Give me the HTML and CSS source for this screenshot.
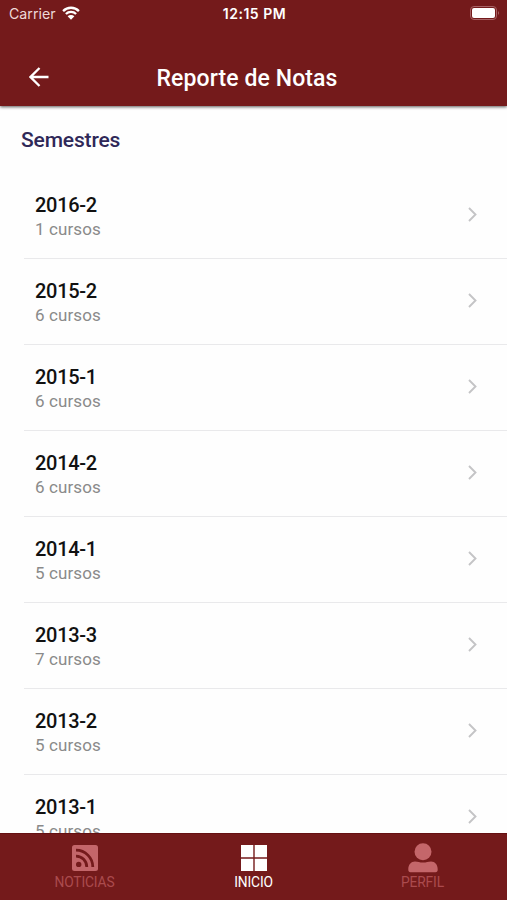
FILE: index.html
```html
<!doctype html>
<html lang="es">
  <head>
    <meta charset="UTF-8" />
    <meta name="viewport" content="width=device-width, initial-scale=1.0" />
    <title>Reporte de Notas</title>
    <link rel="stylesheet" href="styles.css">
  </head>
  <body>

    <header class="header">
      <div class="status-bar">
        <div class="carrier">
          <span class="carrier-name">Carrier</span>
          <svg class="wifi" viewBox="0 0 18 14">
            <path d="M1.1 5.1 A11 11 0 0 1 16.9 5.1 M3.9 8 A7.2 7.2 0 0 1 14.1 8" fill="none" stroke="#fff" stroke-width="2.3" />
            <path d="M5.6 10.300 A4.900 4.900 0 0 1 12.400 10.300 L9 13.800 Z" fill="#fff" />
          </svg>
        </div>
        <span class="time">12:15 PM</span>
        <svg class="battery" viewBox="0 0 30 14">
          <rect x="0.5" y="0.5" width="26" height="13" rx="3.5" fill="none" stroke="#a86265" />
          <rect x="2" y="2" width="23" height="10" rx="2" fill="#fff" />
          <path d="M28 5 Q30 7 28 9 Z" fill="#a86265" />
        </svg>
      </div>
      <div class="nav-bar">
        <svg class="back" viewBox="0 0 20 20">
          <path d="M19.5 10 H2 M10.5 1 L1.5 10 L10.5 19" fill="none" stroke="#fff" stroke-width="2.3" />
        </svg>
        <h1 class="title">Reporte de Notas</h1>
      </div>
    </header>

    <main class="content">
      <h2 class="section-title">Semestres</h2>
      <ul class="semesters">
        <li class="semester">
          <div>
            <h3>2016-2</h3>
            <p>1 cursos</p>
          </div>
          <svg class="chevron" viewBox="0 0 9 15"><path d="M1 1 L7.5 7.5 L1 14" /></svg>
        </li>
        <li class="semester">
          <div>
            <h3>2015-2</h3>
            <p>6 cursos</p>
          </div>
          <svg class="chevron" viewBox="0 0 9 15"><path d="M1 1 L7.5 7.5 L1 14" /></svg>
        </li>
        <li class="semester">
          <div>
            <h3>2015-1</h3>
            <p>6 cursos</p>
          </div>
          <svg class="chevron" viewBox="0 0 9 15"><path d="M1 1 L7.5 7.5 L1 14" /></svg>
        </li>
        <li class="semester">
          <div>
            <h3>2014-2</h3>
            <p>6 cursos</p>
          </div>
          <svg class="chevron" viewBox="0 0 9 15"><path d="M1 1 L7.5 7.5 L1 14" /></svg>
        </li>
        <li class="semester">
          <div>
            <h3>2014-1</h3>
            <p>5 cursos</p>
          </div>
          <svg class="chevron" viewBox="0 0 9 15"><path d="M1 1 L7.5 7.5 L1 14" /></svg>
        </li>
        <li class="semester">
          <div>
            <h3>2013-3</h3>
            <p>7 cursos</p>
          </div>
          <svg class="chevron" viewBox="0 0 9 15"><path d="M1 1 L7.5 7.5 L1 14" /></svg>
        </li>
        <li class="semester">
          <div>
            <h3>2013-2</h3>
            <p>5 cursos</p>
          </div>
          <svg class="chevron" viewBox="0 0 9 15"><path d="M1 1 L7.5 7.5 L1 14" /></svg>
        </li>
        <li class="semester">
          <div>
            <h3>2013-1</h3>
            <p>5 cursos</p>
          </div>
          <svg class="chevron" viewBox="0 0 9 15"><path d="M1 1 L7.5 7.5 L1 14" /></svg>
        </li>
      </ul>
    </main>

    <nav class="tabs">
      <a class="tab">
        <svg width="26" height="26" viewBox="0 0 26 26">
          <rect width="26" height="26" rx="2.5" fill="#c4666a" />
          <circle cx="6.7" cy="19.4" r="2.7" fill="#741a1b" />
          <path d="M4 11.2 A10.8 10.8 0 0 1 14.8 22 M4 5.2 A16.8 16.8 0 0 1 20.8 22" fill="none" stroke="#741a1b" stroke-width="2.8" />
        </svg>
        <span>NOTICIAS</span>
      </a>
      <a class="tab active">
        <svg width="26" height="26" viewBox="0 0 26 26">
          <path d="M0 0 H12.3 V12.3 H0 Z M13.7 0 H26 V12.3 H13.7 Z M0 13.7 H12.3 V26 H0 Z M13.7 13.7 H26 V26 H13.7 Z" fill="#fff" />
        </svg>
        <span>INICIO</span>
      </a>
      <a class="tab">
        <svg width="30" height="30" viewBox="0 0 30 30">
          <circle cx="15" cy="8.7" r="8.5" fill="#c4666a" />
          <path d="M0.3 26.500 C0.300 21.500 3 18.500 7 18.500 C10 18.500 11.500 19.600 15 19.600 C18.500 19.600 20 18.500 23 18.500 C27 18.500 29.700 21.500 29.700 26.500 Q29.700 29.300 27.500 29.300 H2.500 Q0.300 29.300 0.300 26.500 Z" fill="#c4666a" />
        </svg>
        <span>PERFIL</span>
      </a>
    </nav>

  </body>
</html>
```

FILE: styles.css
```css
* {
  box-sizing: border-box;
}
body {
  display: flex;
  flex-direction: column;
  height: 900px;
  margin: 0;
  overflow: hidden;
  background-color: #fefefe;
  font-family: Roboto, sans-serif;
}
h1, h2, h3, p, ul {
  margin: 0;
  padding: 0;
}

.header {
  flex: none;
  height: 106px;
  background-color: #741a1b;
  box-shadow: 0 1px 3px rgba(0, 0, 0, 0.65);
  color: #ffffff;
  z-index: 1;
}
.status-bar {
  display: grid;
  grid-template-columns: 1fr auto 1fr;
  align-items: center;
  height: 27px;
  padding: 0 7px 0 9px;
  font-family: Inter, sans-serif;
}
.carrier {
  display: flex;
  align-items: center;
  gap: 6px;
}
.carrier-name {
  color: #eed8d8;
  font-size: 14.2px;
}
.wifi {
  width: 18px;
  height: 14px;
  margin-bottom: 2px;
}
.time {
  font-size: 14px;
  font-weight: 600;
  letter-spacing: 0.5px;
}
.battery {
  justify-self: end;
  width: 30px;
  height: 14px;
  margin-bottom: 1px;
}
.nav-bar {
  display: grid;
  grid-template-columns: 49px 1fr 62px;
  align-items: center;
  height: 79px;
  padding-top: 22px;
}
.back {
  justify-self: end;
  width: 20px;
  height: 20px;
  margin-bottom: 2px;
}
.title {
  padding-top: 2px;
  font-size: 23px;
  font-weight: 500;
  letter-spacing: 0.1px;
  text-align: center;
}

.content {
  flex: 1;
  min-height: 0;
  overflow: hidden;
}
.section-title {
  padding: 21px 21px 0;
  color: #2f2858;
  font-size: 21px;
  font-weight: 500;
  letter-spacing: -0.15px;
  line-height: 26px;
}
.semesters {
  margin: 20px 0 0 24px;
  list-style: none;
}
.semester {
  display: flex;
  align-items: center;
  justify-content: space-between;
  height: 85.95px;
  padding: 3px 30px 0 11px;
  border-bottom: 1px solid #e9e9eb;
}
.semester h3 {
  color: #111111;
  font-size: 20px;
  font-weight: 500;
  letter-spacing: -0.3px;
  line-height: 26px;
}
.semester p {
  margin-bottom: 2px;
  color: #8a8a8a;
  font-size: 17px;
  letter-spacing: 0.1px;
  line-height: 22px;
}
.chevron {
  width: 9px;
  height: 15px;
  margin-bottom: 4px;
}
.chevron path {
  fill: none;
  stroke: #c4c4c6;
  stroke-width: 1.9;
}

.tabs {
  display: grid;
  grid-template-columns: repeat(3, 1fr);
  flex: none;
  height: 67px;
  background-color: #741a1b;
  border-top: 1px solid #651012;
  z-index: 1;
}
.tab {
  display: flex;
  flex-direction: column;
  align-items: center;
  justify-content: flex-end;
  padding-bottom: 10px;
  color: #ab4b4e;
  font-size: 13.8px;
  letter-spacing: -0.15px;
  line-height: 16px;
}
.tab svg {
  margin-bottom: 3px;
}
.tab:last-child svg {
  margin-bottom: 1px;
}
.active {
  color: #ffffff;
}
```
